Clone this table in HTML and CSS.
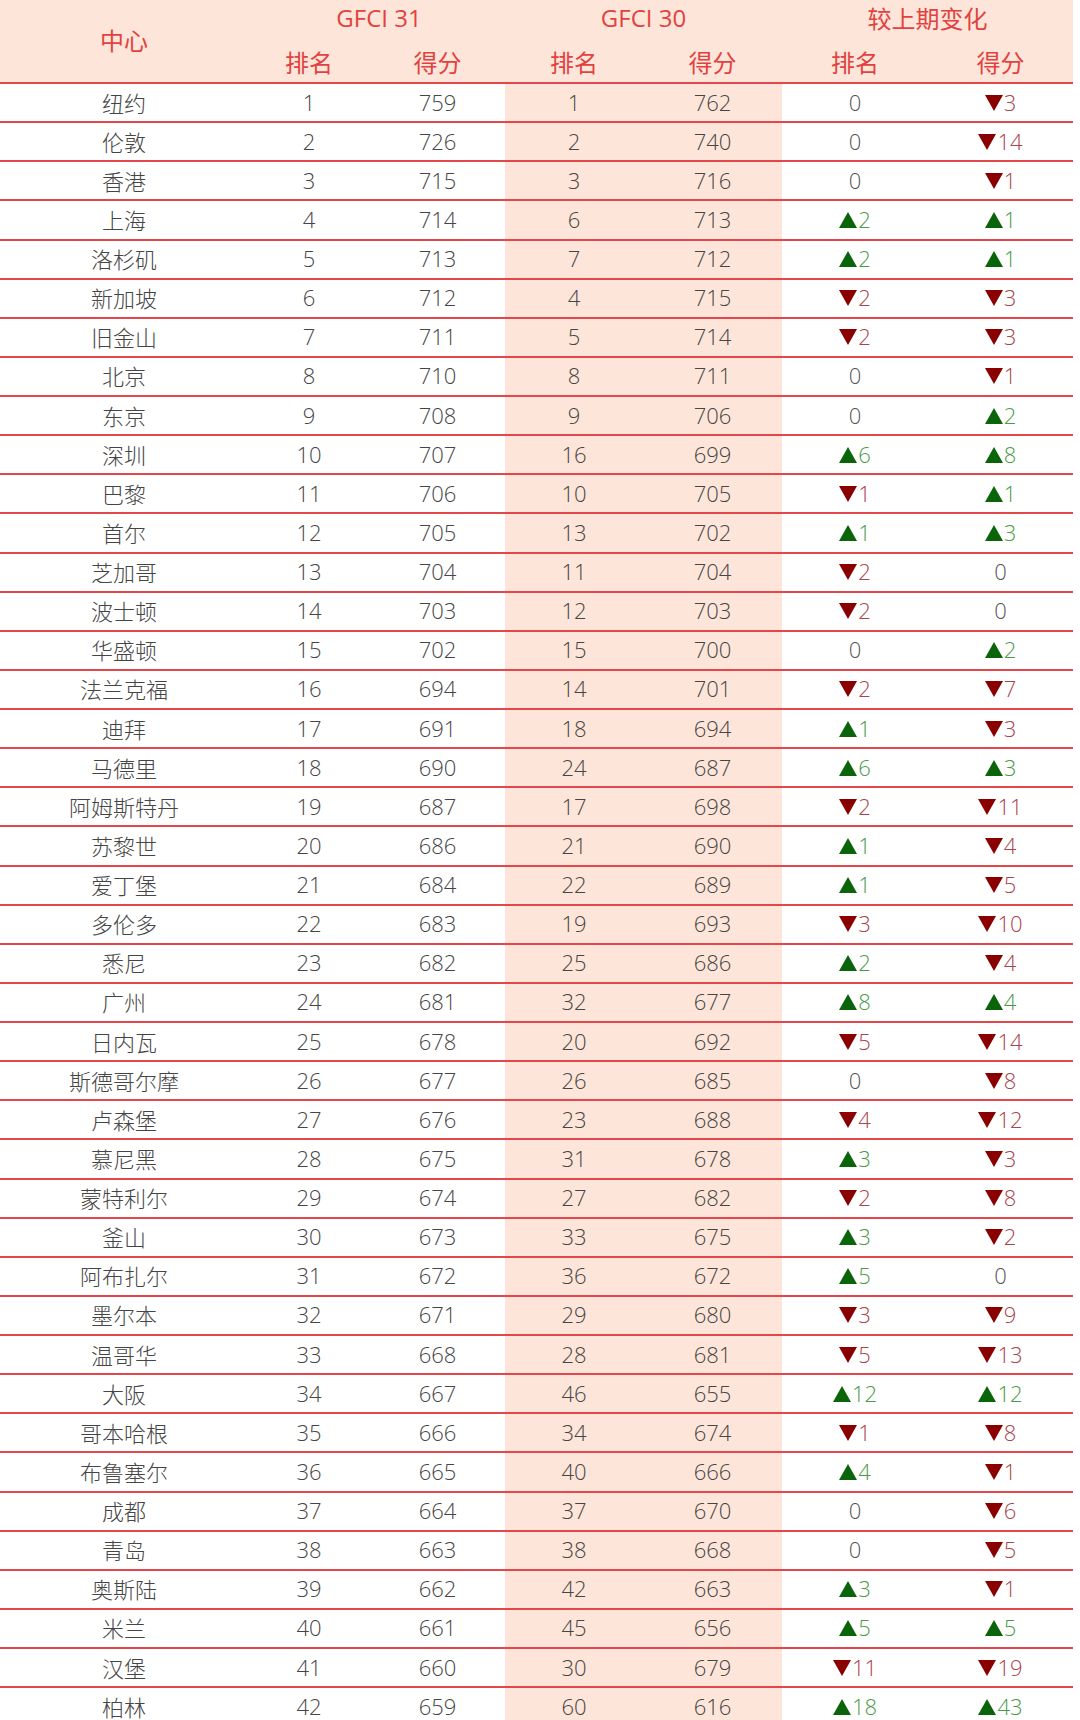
FILE: index.html
```html
<!DOCTYPE html>
<html lang="zh">
<head>
<meta charset="utf-8">
<title>GFCI 31</title>
<link rel="stylesheet" href="styles.css">
</head>
<body>
<div class="table">
  <div class="head">
    <div class="h-center">中心</div>
    <div class="h-group g31">GFCI 31</div>
    <div class="h-group g30 shade">GFCI 30</div>
    <div class="h-group gch">较上期变化</div>
    <div class="h-sub">排名</div>
    <div class="h-sub">得分</div>
    <div class="h-sub shade">排名</div>
    <div class="h-sub shade">得分</div>
    <div class="h-sub">排名</div>
    <div class="h-sub">得分</div>
  </div>
  <div id="rows"></div>
</div>
<script src="script.js"></script>
</body>
</html>
```
FILE: styles.css
```css
html, body {
  margin: 0;
  padding: 0;
  background: #ffffff;
}
body {
  width: 1080px;
  height: 1720px;
  overflow: hidden;
  font-family: "Open Sans", "Noto Sans CJK SC", sans-serif;
}
.table {
  width: 1073px;
}
.head {
  display: grid;
  grid-template-columns: 248px 122px 135px 138px 139px 146px 145px;
  grid-template-rows: 36px 46px;
  background: #fde6d9;
  color: #e2423f;
  font-size: 24px;
}
.h-center {
  grid-row: 1 / span 2;
  grid-column: 1;
  display: flex;
  align-items: center;
  justify-content: center;
  padding-bottom: 4px;
  font-family: "Noto Sans CJK SC", sans-serif;
}
.h-group {
  display: flex;
  align-items: center;
  justify-content: center;
  grid-row: 1;
  padding-bottom: 1px;
}
.g31 { grid-column: 2 / span 2; padding-left: 5px; }
.g30 { grid-column: 4 / span 2; }
.gch { grid-column: 6 / span 2; font-family: "Noto Sans CJK SC", sans-serif; }
.h-sub {
  grid-row: 2;
  display: flex;
  align-items: center;
  justify-content: center;
  padding-top: 4px;
  font-family: "Noto Sans CJK SC", sans-serif;
}
.row {
  display: grid;
  grid-template-columns: 248px 122px 135px 138px 139px 146px 145px;
  height: 39.14px;
  box-sizing: border-box;
  border-top: 2px solid #e4474b;
  color: #454545;
  font-size: 22px;
  font-weight: 300;
}
.cell {
  display: flex;
  align-items: center;
  justify-content: center;
  padding-bottom: 2px;
}
.shade {
  background: #fde6d9;
}
.city {
  font-family: "Noto Sans CJK SC", sans-serif;
  font-size: 22px;
}
.zero { color: #555555; }
.up { color: #4a9a48; }
.down { color: #a9434c; }
.tri-up {
  display: inline-block;
  width: 0;
  height: 0;
  border-left: 9px solid transparent;
  border-right: 9px solid transparent;
  border-bottom: 16px solid #0a640a;
  margin-right: 1px;
  margin-top: 2px;
}
.tri-down {
  display: inline-block;
  width: 0;
  height: 0;
  border-left: 9px solid transparent;
  border-right: 9px solid transparent;
  border-top: 16px solid #8a0000;
  margin-right: 1px;
  margin-top: 2px;
}
```
FILE: script.js
```js
var data = [
["纽约",1,759,1,762,"0","-3"],
["伦敦",2,726,2,740,"0","-14"],
["香港",3,715,3,716,"0","-1"],
["上海",4,714,6,713,"+2","+1"],
["洛杉矶",5,713,7,712,"+2","+1"],
["新加坡",6,712,4,715,"-2","-3"],
["旧金山",7,711,5,714,"-2","-3"],
["北京",8,710,8,711,"0","-1"],
["东京",9,708,9,706,"0","+2"],
["深圳",10,707,16,699,"+6","+8"],
["巴黎",11,706,10,705,"-1","+1"],
["首尔",12,705,13,702,"+1","+3"],
["芝加哥",13,704,11,704,"-2","0"],
["波士顿",14,703,12,703,"-2","0"],
["华盛顿",15,702,15,700,"0","+2"],
["法兰克福",16,694,14,701,"-2","-7"],
["迪拜",17,691,18,694,"+1","-3"],
["马德里",18,690,24,687,"+6","+3"],
["阿姆斯特丹",19,687,17,698,"-2","-11"],
["苏黎世",20,686,21,690,"+1","-4"],
["爱丁堡",21,684,22,689,"+1","-5"],
["多伦多",22,683,19,693,"-3","-10"],
["悉尼",23,682,25,686,"+2","-4"],
["广州",24,681,32,677,"+8","+4"],
["日内瓦",25,678,20,692,"-5","-14"],
["斯德哥尔摩",26,677,26,685,"0","-8"],
["卢森堡",27,676,23,688,"-4","-12"],
["慕尼黑",28,675,31,678,"+3","-3"],
["蒙特利尔",29,674,27,682,"-2","-8"],
["釜山",30,673,33,675,"+3","-2"],
["阿布扎尔",31,672,36,672,"+5","0"],
["墨尔本",32,671,29,680,"-3","-9"],
["温哥华",33,668,28,681,"-5","-13"],
["大阪",34,667,46,655,"+12","+12"],
["哥本哈根",35,666,34,674,"-1","-8"],
["布鲁塞尔",36,665,40,666,"+4","-1"],
["成都",37,664,37,670,"0","-6"],
["青岛",38,663,38,668,"0","-5"],
["奥斯陆",39,662,42,663,"+3","-1"],
["米兰",40,661,45,656,"+5","+5"],
["汉堡",41,660,30,679,"-11","-19"],
["柏林",42,659,60,616,"+18","+43"]
];
function change(v) {
  if (v === "0") return '<div class="cell zero">0</div>';
  var up = v.charAt(0) === "+";
  return '<div class="cell ' + (up ? 'up' : 'down') + '"><span class="' + (up ? 'tri-up' : 'tri-down') + '"></span>' + v.slice(1) + '</div>';
}
var html = "";
data.forEach(function (r) {
  html += '<div class="row">' +
    '<div class="cell city">' + r[0] + '</div>' +
    '<div class="cell">' + r[1] + '</div>' +
    '<div class="cell">' + r[2] + '</div>' +
    '<div class="cell shade">' + r[3] + '</div>' +
    '<div class="cell shade">' + r[4] + '</div>' +
    change(r[5]) + change(r[6]) +
    '</div>';
});
document.getElementById("rows").innerHTML = html;
```
